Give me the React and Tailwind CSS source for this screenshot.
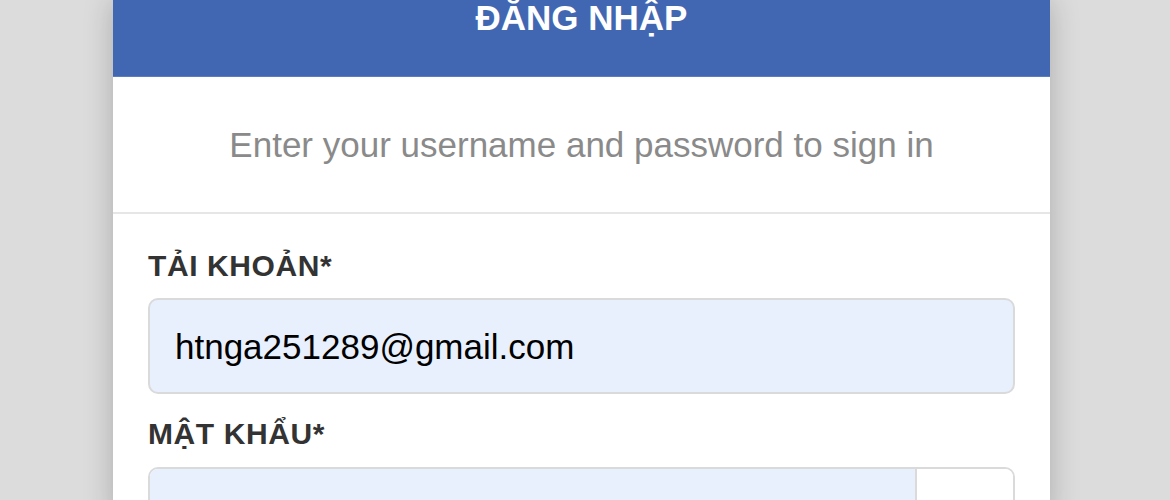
export default function App() {
  return (
    <div
      className="h-[500px] w-full overflow-hidden bg-[#dcdcdc]"
      style={{ fontFamily: '"Liberation Sans", Arial, sans-serif' }}
    >
      <div className="ml-[113px] w-[937px] bg-white shadow-[0_0_28px_rgba(0,0,0,0.22)] h-[520px]">
        <div className="h-[77px] bg-[#4267b2] border-b border-[#5a7cc0]">
          <h1 className="text-center text-[35px] leading-[35px] font-bold text-white">
            ĐĂNG NHẬP
          </h1>
        </div>
        <div className="h-[137px] flex items-center justify-center border-b-2 border-[#e6e6e6]">
          <p className="text-[35px] leading-[35px] text-[#8a8a8a]">
            Enter your username and password to sign in
          </p>
        </div>
        <div className="px-[35px] pt-[37px]">
          <label className="block text-[30px] leading-[30px] font-bold tracking-[0.6px] text-[#333]">
            TẢI KHOẢN*
          </label>
          <div className="mt-[17px] h-[96px] rounded-[10px] border-2 border-[#dadada] bg-[#e8f0fe] flex items-center pl-[25px] pt-[3px]">
            <span className="text-[35px] text-black">htnga251289@gmail.com</span>
          </div>
          <label className="mt-[25px] block text-[30px] leading-[30px] font-bold tracking-[0.6px] text-[#333]">
            MẬT KHẨU*
          </label>
          <div className="mt-[18px] h-[95px] flex rounded-[10px] border-2 border-[#dadada] overflow-hidden">
            <div className="flex-1 bg-[#e8f0fe]"></div>
            <div className="w-[98px] bg-white border-l-2 border-[#dadada]"></div>
          </div>
        </div>
      </div>
    </div>
  );
}
